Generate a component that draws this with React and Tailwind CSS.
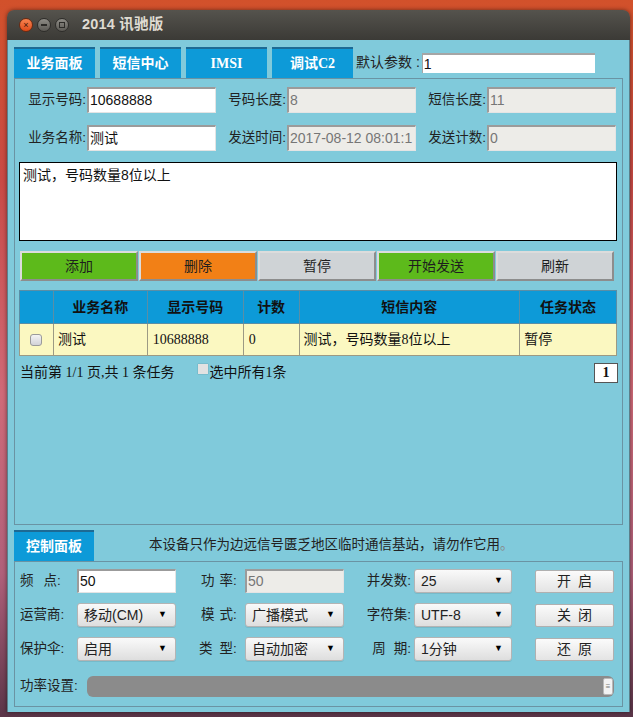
import React from "react";

// --- fonts ---
const sans = "font-['Liberation_Sans','Noto_Sans_CJK_SC',sans-serif]";
const serif = "font-['Liberation_Serif','Noto_Sans_CJK_SC',serif]";

// --- small pieces ---
const Field = ({ value, disabled, className }) => (
  <div
    className={`h-[26px] flex items-center pl-px overflow-hidden whitespace-nowrap text-[14px] border-t-2 border-l-2 border-[#9b9b9b] border-b border-r border-b-[#e4e4e4] border-r-[#e4e4e4] ${
      disabled ? "bg-[#edece8] text-[#767676]" : "bg-white text-[#111]"
    } ${className}`}
  >
    {value}
  </div>
);

const Select = ({ value }) => (
  <div className="h-[24px] w-full flex items-center justify-between pl-[6px] pr-[8px] rounded-[3px] border border-[#b4b4b4] bg-gradient-to-b from-[#fafafa] to-[#dedede] text-[14px] text-[#222] shadow-[0_1px_0_rgba(0,0,0,0.08)]">
    <span>{value}</span>
    <span className="text-[9px] text-black">▼</span>
  </div>
);

const SideButton = ({ a, b }) => (
  <div className="w-[79px] h-[23px] flex items-center justify-center rounded-[2px] border border-[#b0b0b0] bg-gradient-to-b from-[#fbfbfb] to-[#e4e4e4] text-[14px] text-[#222]">
    {a}
    <span className="ml-[7px]">{b}</span>
  </div>
);

// spaced two-character label, e.g. 频  点:
const Spaced = ({ a, b, gap }) => (
  <span className="whitespace-nowrap">
    {a}
    <span className={gap}>{b}:</span>
  </span>
);

const actions = [
  { label: "添加", bg: "bg-[#5dba1b]" },
  { label: "删除", bg: "bg-[#f28016]" },
  { label: "暂停", bg: "bg-[#cfd3d6]" },
  { label: "开始发送", bg: "bg-[#5dba1b]" },
  { label: "刷新", bg: "bg-[#cfd3d6]" },
];

const tabs = ["业务面板", "短信中心", "IMSI", "调试C2"];

export default function App() {
  return (
    <div
      className={`w-[633px] h-[717px] overflow-hidden pt-[10px] pl-[7px] bg-[linear-gradient(180deg,#d2512b_0%,#c94a45_25%,#d06a78_55%,#b0607a_80%,#5a3548_100%)] ${sans}`}
    >
      {/* WINDOW */}
      <div className="w-[623px] rounded-t-[7px] overflow-hidden shadow-[0_0_4px_rgba(0,0,0,0.5)]">
        {/* TITLE BAR */}
        <div className="h-[30px] flex items-center pl-[12px] bg-gradient-to-b from-[#55534d] to-[#3b3a36]">
          <div className="flex gap-[4px]">
            <div className="w-[14px] h-[14px] rounded-full bg-gradient-to-b from-[#f7834f] to-[#df4a16] border border-[#6b2a12] flex items-center justify-center text-[9px] leading-none text-[#3a1608]">
              ×
            </div>
            <div className="w-[14px] h-[14px] rounded-full bg-gradient-to-b from-[#8e8c86] to-[#5c5a55] border border-[#2e2d2a] flex items-center justify-center">
              <div className="w-[6px] h-[1.5px] bg-[#2c2b28]" />
            </div>
            <div className="w-[14px] h-[14px] rounded-full bg-gradient-to-b from-[#8e8c86] to-[#5c5a55] border border-[#2e2d2a] flex items-center justify-center">
              <div className="w-[6px] h-[6px] border border-[#2c2b28]" />
            </div>
          </div>
          <div className="ml-[13px] text-[14.5px] font-bold text-[#dfdbd2] tracking-[0.2px]">
            2014 讯驰版
          </div>
        </div>

        {/* CONTENT */}
        <div className="bg-[#80cadb] pt-[7px] pl-[6px] pr-[6px] pb-[5px] border-x border-[#5c7f8a]">
          {/* TAB ROW */}
          <div className="flex items-stretch h-[31px]">
            {tabs.map((t) => (
              <div
                key={t}
                className={`w-[81px] mr-[5px] flex items-center justify-center bg-[#0d9ad8] border-t-2 border-[#1d6a94] text-white font-bold text-[14px] ${serif}`}
              >
                {t}
              </div>
            ))}
            <div className="flex items-center ml-[-2px] text-[14px] text-[#222]">
              默认参数 :
              <div className="ml-[2px] w-[173px] h-[20px] bg-white border-t-2 border-l border-[#a5a5a5] text-[14px] text-[#111] pl-px leading-[18px]">
                1
              </div>
            </div>
          </div>

          {/* MAIN PANEL */}
          <div className="h-[447px] border border-[#6a93a3] pl-[2px] pt-[8px]">
            {/* FIELD ROWS */}
            {[
              [
                ["显示号码:", "10688888", false],
                ["号码长度:", "8", true],
                ["短信长度:", "11", true],
              ],
              [
                ["业务名称:", "测试", false],
                ["发送时间:", "2017-08-12 08:01:1", true],
                ["发送计数:", "0", true],
              ],
            ].map((row, i) => (
              <div key={i} className={`flex ${i === 1 ? "mt-[12px]" : ""}`}>
                {row.map(([label, value, disabled]) => (
                  <div key={label} className="flex items-center w-[200px]">
                    <div className="w-[70px] text-right text-[13.5px] text-[#222] pr-[1px]">{label}</div>
                    <Field value={value} disabled={disabled} className="w-[129px] text-[13.5px]" />
                  </div>
                ))}
              </div>
            ))}

            {/* MESSAGE TEXTAREA */}
            <div className="mt-[11px] ml-[2px] w-[598px] h-[79px] bg-white border border-black px-[3px] pt-[2px] text-[14px] text-[#111]">
              测试，号码数量8位以上
            </div>

            {/* ACTION BUTTONS */}
            <div className="flex gap-px mt-[10px] ml-[3px]">
              {actions.map((a) => (
                <div
                  key={a.label}
                  className={`w-[118px] h-[30px] flex items-center justify-center text-[14px] text-[#1e1e1e] border-2 border-t-[#dcdcdc] border-l-[#dcdcdc] border-b-[#8d8d8d] border-r-[#8d8d8d] ${a.bg}`}
                >
                  {a.label}
                </div>
              ))}
            </div>

            {/* TASK TABLE */}
            <table className={`mt-[9px] ml-[2px] w-[598px] border-collapse text-[14px] ${serif}`}>
              <thead>
                <tr className="h-[33px] bg-[#0d9ad8] text-[#111]">
                  <th className="w-[34px] border border-[#5a8ea6]" />
                  <th className="w-[94px] border border-[#5a8ea6] font-bold">业务名称</th>
                  <th className="w-[96px] border border-[#5a8ea6] font-bold">显示号码</th>
                  <th className="w-[56px] border border-[#5a8ea6] font-bold">计数</th>
                  <th className="w-[221px] border border-[#5a8ea6] font-bold">短信内容</th>
                  <th className="w-[97px] border border-[#5a8ea6] font-bold">任务状态</th>
                </tr>
              </thead>
              <tbody>
                <tr className="h-[32px] bg-[#fbf8c1] text-[#111]">
                  <td className="border border-[#9c9a84]">
                    <div className="mx-auto w-[12px] h-[12px] rounded-[3px] border border-[#9a9a9a] bg-gradient-to-b from-[#f4f4f4] to-[#d2d2d8]" />
                  </td>
                  <td className="border border-[#9c9a84] pl-[4px]">测试</td>
                  <td className="border border-[#9c9a84] pl-[5px]">10688888</td>
                  <td className="border border-[#9c9a84] pl-[5px]">0</td>
                  <td className="border border-[#9c9a84] pl-[4px]">测试，号码数量8位以上</td>
                  <td className="border border-[#9c9a84] pl-[4px]">暂停</td>
                </tr>
              </tbody>
            </table>

            {/* PAGER */}
            <div className={`flex items-center mt-[6px] ml-[3px] w-[598px] text-[14px] text-[#111] ${serif}`}>
              <span className="whitespace-pre">当前第 1/1 页,共 1 条任务</span>
              <div className="ml-[24px] w-[10px] h-[10px] bg-[#e2e2e2] shadow-[0_0_1px_rgba(0,0,0,0.4)] self-start mt-[2px]" />
              <span className="ml-[1px]">选中所有1条</span>
              <div className="ml-auto w-[24px] h-[20px] bg-white border border-[#555] flex items-center justify-center font-bold">
                1
              </div>
            </div>
          </div>

          {/* CONTROL TAB ROW */}
          <div className="mt-[5px] flex items-stretch h-[31px]">
            <div className={`w-[80px] flex items-center justify-center bg-[#0d9ad8] border-t-2 border-[#1d6a94] text-white font-bold text-[14px] ${serif}`}>
              控制面板
            </div>
            <div className="ml-[55px] flex items-center text-[13.5px] text-[#222]">
              本设备只作为边远信号匮乏地区临时通信基站，请勿作它用<span className="text-[#888]">。</span>
            </div>
          </div>

          {/* CONTROL PANEL */}
          <div className="h-[146px] border border-[#6a93a3] pt-[7px] pl-[5px] text-[13.5px] text-[#222]">
            {/* row 1 */}
            <div className="flex items-center h-[24px]">
              <div className="w-[57px]"><Spaced a="频" b="点" gap="ml-[10px]" /></div>
              <Field value="50" className="w-[99px] !h-[24px]" />
              <div className="w-[25px]" />
              <div className="w-[44px]"><Spaced a="功" b="率" gap="ml-[5px]" /></div>
              <Field value="50" disabled className="w-[99px] !h-[24px]" />
              <div className="w-[70px] text-right pr-[3px]">并发数:</div>
              <div className="w-[98px]"><Select value="25" /></div>
              <div className="w-[23px]" />
              <SideButton a="开" b="启" />
            </div>
            {/* row 2 */}
            <div className="flex items-center h-[24px] mt-[10px]">
              <div className="w-[57px]">运营商:</div>
              <div className="w-[99px]"><Select value="移动(CM)" /></div>
              <div className="w-[25px]" />
              <div className="w-[44px]"><Spaced a="模" b="式" gap="ml-[5px]" /></div>
              <div className="w-[99px]"><Select value="广播模式" /></div>
              <div className="w-[70px] text-right pr-[3px]">字符集:</div>
              <div className="w-[98px]"><Select value="UTF-8" /></div>
              <div className="w-[23px]" />
              <SideButton a="关" b="闭" />
            </div>
            {/* row 3 */}
            <div className="flex items-center h-[24px] mt-[10px]">
              <div className="w-[57px]">保护伞:</div>
              <div className="w-[99px]"><Select value="启用" /></div>
              <div className="w-[25px]" />
              <div className="w-[44px] ml-[-2px] mr-[2px]"><Spaced a="类" b="型" gap="ml-[7px]" /></div>
              <div className="w-[99px]"><Select value="自动加密" /></div>
              <div className="w-[70px] text-right pr-[3px]"><Spaced a="周" b="期" gap="ml-[8px]" /></div>
              <div className="w-[98px]"><Select value="1分钟" /></div>
              <div className="w-[23px]" />
              <SideButton a="还" b="原" />
            </div>
            {/* row 4: power slider */}
            <div className="flex items-center h-[21px] mt-[15px]">
              <div className="w-[67px]">功率设置:</div>
              <div className="w-[527px] h-[21px] rounded-[6px] bg-[#8b8b8b] flex items-center justify-end pr-[1px]">
                <div className="w-[10px] h-[17px] rounded-[2px] bg-[#f2f2f2] border border-[#b8b8b8] flex items-center justify-center text-[8px] leading-none text-[#777]">
                  ≡
                </div>
              </div>
            </div>
          </div>
        </div>
      </div>
    </div>
  );
}
